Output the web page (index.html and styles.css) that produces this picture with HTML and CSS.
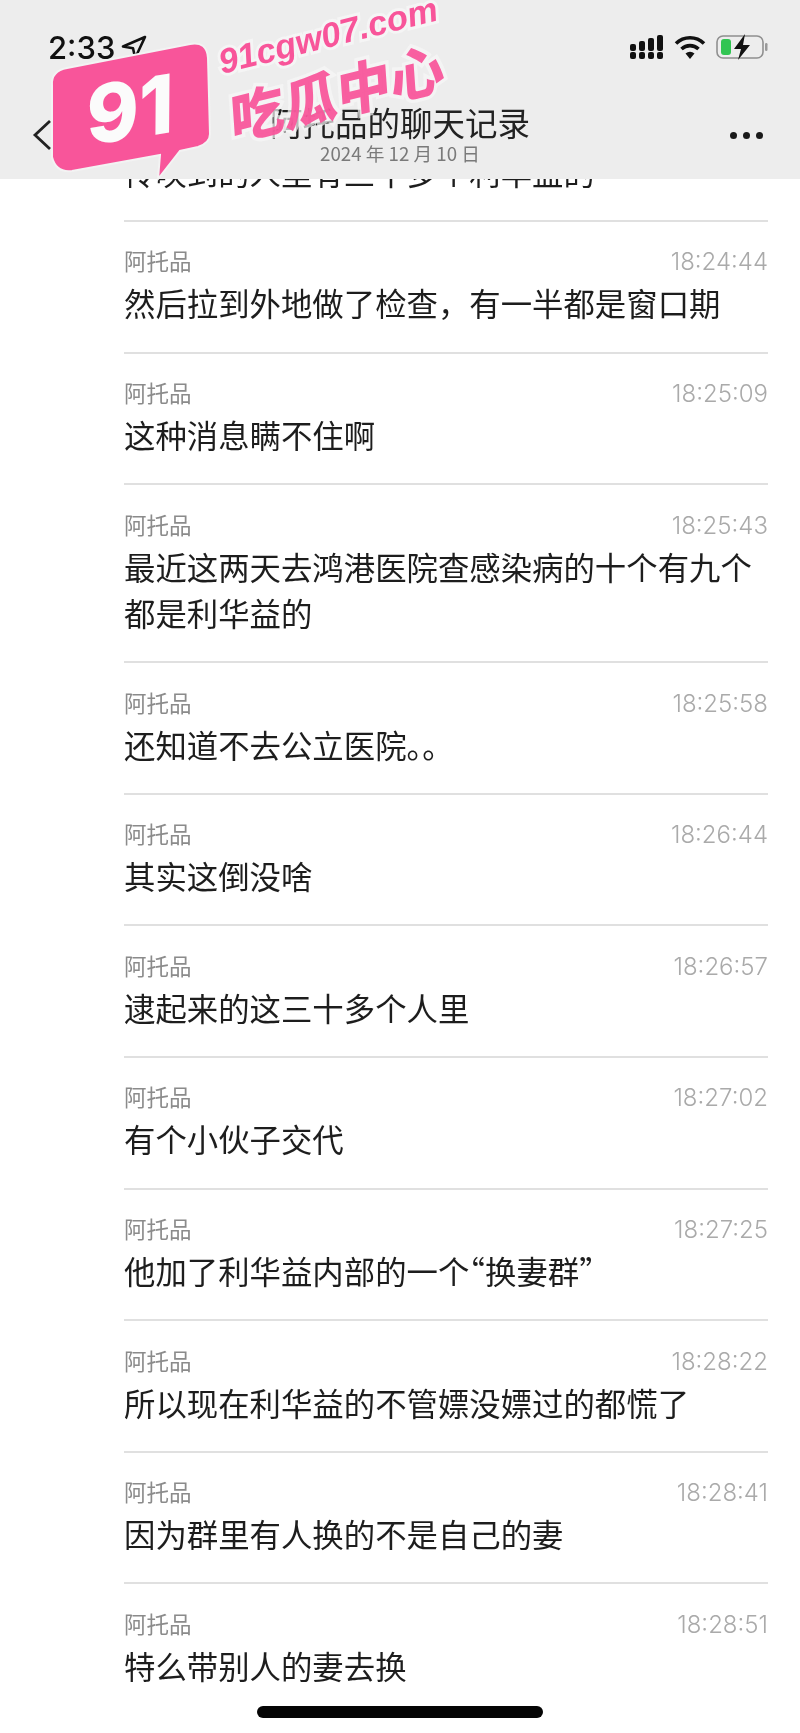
FILE: index.html
```html
<!DOCTYPE html>
<html lang="zh-CN">
<head>
<meta charset="utf-8">
<title>阿托品的聊天记录</title>
<link rel="stylesheet" href="styles.css">
</head>
<body>
<div class="screen">
  <header class="topbar">
    <div class="status">
      <div class="status-left">
        <span class="clock">2:33</span>
        <svg class="loc" viewBox="0 0 26 26"><path d="M24 3 2 12.500l10 1.800 2.200 9.700z" fill="none" stroke="#111" stroke-width="2.600" stroke-linejoin="round"/></svg>
      </div>
      <div class="status-right">
        <svg class="signal" viewBox="0 0 34 26"><g fill="#111"><rect x="0" y="10" width="6" height="7" rx="2"/><rect x="0" y="18" width="6" height="7" rx="2"/><rect x="9" y="7" width="6" height="10" rx="2"/><rect x="9" y="18" width="6" height="7" rx="2"/><rect x="18" y="4" width="6" height="13" rx="2"/><rect x="18" y="18" width="6" height="7" rx="2"/><rect x="27" y="1" width="6" height="16" rx="2"/><rect x="27" y="18" width="6" height="7" rx="2"/></g></svg>
        <svg class="wifi" viewBox="0 0 32 26"><path d="M2 9.500a20 20 0 0 1 28 0" fill="none" stroke="#111" stroke-width="3.600"/><path d="M7.500 15a12.500 12.500 0 0 1 17 0" fill="none" stroke="#111" stroke-width="3.600"/><path d="M11.500 19.500a7 7 0 0 1 9 0L16 25z" fill="#111"/></svg>
        <svg class="battery" viewBox="0 0 52 28"><rect x="1" y="3" width="46" height="22" rx="6" fill="none" stroke="#8f8f8f" stroke-width="1.600"/><rect x="49" y="10" width="2.500" height="8" rx="1.200" fill="#999"/><rect x="5" y="6" width="10" height="16" rx="3" fill="#31c552"/><path d="M29 1 18 16h7l-3 11 12-15h-7z" fill="#111"/></svg>
      </div>
    </div>
    <div class="nav">
      <svg class="back" viewBox="0 0 20 32"><path d="M18 2 3 16l15 14" fill="none" stroke="#222" stroke-width="2.800"/></svg>
      <div class="nav-title">
        <div class="title">阿托品的聊天记录</div>
        <div class="subtitle">2024 年 12 月 10 日</div>
      </div>
      <div class="more"><i></i><i></i><i></i></div>
    </div>
  </header>

  <main class="list">
    <div class="row"><div class="meta"><span class="name">阿托品</span><span class="time">18:24:20</span></div><p class="text">传唤到的人里有三十多个利华益的</p></div>
    <div class="row"><div class="meta"><span class="name">阿托品</span><span class="time">18:24:44</span></div><p class="text">然后拉到外地做了检查，有一半都是窗口期</p></div>
    <div class="row"><div class="meta"><span class="name">阿托品</span><span class="time">18:25:09</span></div><p class="text">这种消息瞒不住啊</p></div>
    <div class="row"><div class="meta"><span class="name">阿托品</span><span class="time">18:25:43</span></div><p class="text">最近这两天去鸿港医院查感染病的十个有九个都是利华益的</p></div>
    <div class="row"><div class="meta"><span class="name">阿托品</span><span class="time">18:25:58</span></div><p class="text">还知道不去公立医院。。</p></div>
    <div class="row"><div class="meta"><span class="name">阿托品</span><span class="time">18:26:44</span></div><p class="text">其实这倒没啥</p></div>
    <div class="row"><div class="meta"><span class="name">阿托品</span><span class="time">18:26:57</span></div><p class="text">逮起来的这三十多个人里</p></div>
    <div class="row"><div class="meta"><span class="name">阿托品</span><span class="time">18:27:02</span></div><p class="text">有个小伙子交代</p></div>
    <div class="row"><div class="meta"><span class="name">阿托品</span><span class="time">18:27:25</span></div><p class="text">他加了利华益内部的一个<span class="q">“</span>换妻群<span class="q">”</span></p></div>
    <div class="row"><div class="meta"><span class="name">阿托品</span><span class="time">18:28:22</span></div><p class="text">所以现在利华益的不管嫖没嫖过的都慌了</p></div>
    <div class="row"><div class="meta"><span class="name">阿托品</span><span class="time">18:28:41</span></div><p class="text">因为群里有人换的不是自己的妻</p></div>
    <div class="row"><div class="meta"><span class="name">阿托品</span><span class="time">18:28:51</span></div><p class="text">特么带别人的妻去换</p></div>
  </main>

  <div class="home"></div>

  <svg class="logo" viewBox="0 0 460 200">
    <path d="M67 68 190 44q17-3 18 14l2 76q0 9-12 13l-18 4-22 28 2-24-88 16q-16 2-20-14L52 85q-1-14 15-17z" fill="#f8559a" stroke="#f3f3f3" stroke-width="2"/>
    <text class="logo-num" x="90" y="145" transform="rotate(-9 90 145)">91</text>
    <text class="logo-url" x="222" y="74" transform="rotate(-14 222 74)">91cgw07.com</text>
    <g transform="translate(232 141) rotate(-14) skewX(-10)"><text class="logo-cn">吃瓜中心</text></g>
  </svg>
</div>
</body>
</html>
```
FILE: styles.css
```css
* { box-sizing: border-box; }
html, body { margin: 0; padding: 0; }
body { background: #fff; font-family: "Noto Sans CJK SC", "Noto Sans", sans-serif; color: #1c1c1c; }
.screen { position: relative; width: 800px; height: 1733px; overflow: hidden; background: #fff; filter: blur(0.4px); }

.topbar { position: absolute; top: 0; left: 0; z-index: 2; width: 800px; height: 179px; background: #ededed; }
.status { display: flex; justify-content: space-between; align-items: center; height: 48px; margin-top: 23px; padding: 0 32px 0 48px; }
.status-left { display: flex; align-items: center; gap: 6px; }
.clock { font: 500 31px/1 Inter, "Liberation Sans", sans-serif; color: #111; }
.loc { width: 26px; height: 26px; }
.status-right { display: flex; align-items: center; gap: 10px; }
.signal { width: 34px; height: 26px; }
.wifi { width: 32px; height: 26px; }
.battery { width: 52px; height: 28px; }

.nav { position: relative; display: flex; justify-content: space-between; align-items: center; height: 80px; margin-top: 24px; padding: 0 37px 0 32px; }
.back { width: 20px; height: 32px; }
.nav-title { position: absolute; left: 0; right: 0; top: 4px; text-align: center; }
.title { font-size: 32.500px; line-height: 46px; color: #222; }
.subtitle { margin-top: -5px; font-size: 18.700px; line-height: 26px; color: #7a7a7a; }
.more { display: flex; gap: 6px; }
.more i { width: 7px; height: 7px; border-radius: 50%; background: #1a1a1a; }

.list { padding: 90.400px 32px 0 124px; }
.row { padding: 22.500px 0 24.700px; border-bottom: 2px solid #e0e0e0; }
.row:last-child { border-bottom: 0; }
.meta { display: flex; justify-content: space-between; align-items: center; height: 32px; }
.name { font-size: 22.500px; line-height: 32px; color: #8b8b8b; }
.time { padding-top: 4px; font: 300 24px/32px Inter, "Liberation Sans", sans-serif; color: #aaa; }
.text { margin: 4px 0 0; font-size: 31.400px; line-height: 46.400px; color: #1d1d1d; }
.q { font-feature-settings: "halt"; }

.home { position: absolute; left: 257px; bottom: 15px; z-index: 3; width: 286px; height: 12px; border-radius: 6px; background: #050505; }

.logo { position: absolute; left: 0; top: 0; z-index: 4; width: 460px; height: 200px; }
.logo-num { font: italic 800 80px "Inter", "Liberation Sans", sans-serif; fill: #fbfbfb; }
.logo-url { font: italic 700 34.500px "Liberation Sans", sans-serif; fill: #f8559a; stroke: rgba(246, 246, 246, 0.85); stroke-width: 6px; paint-order: stroke; }
.logo-cn { font: 900 55px "Noto Sans CJK SC", sans-serif; fill: #f8559a; fill-opacity: 0.94; stroke: rgba(246, 246, 246, 0.7); stroke-width: 7px; paint-order: stroke; }
```
